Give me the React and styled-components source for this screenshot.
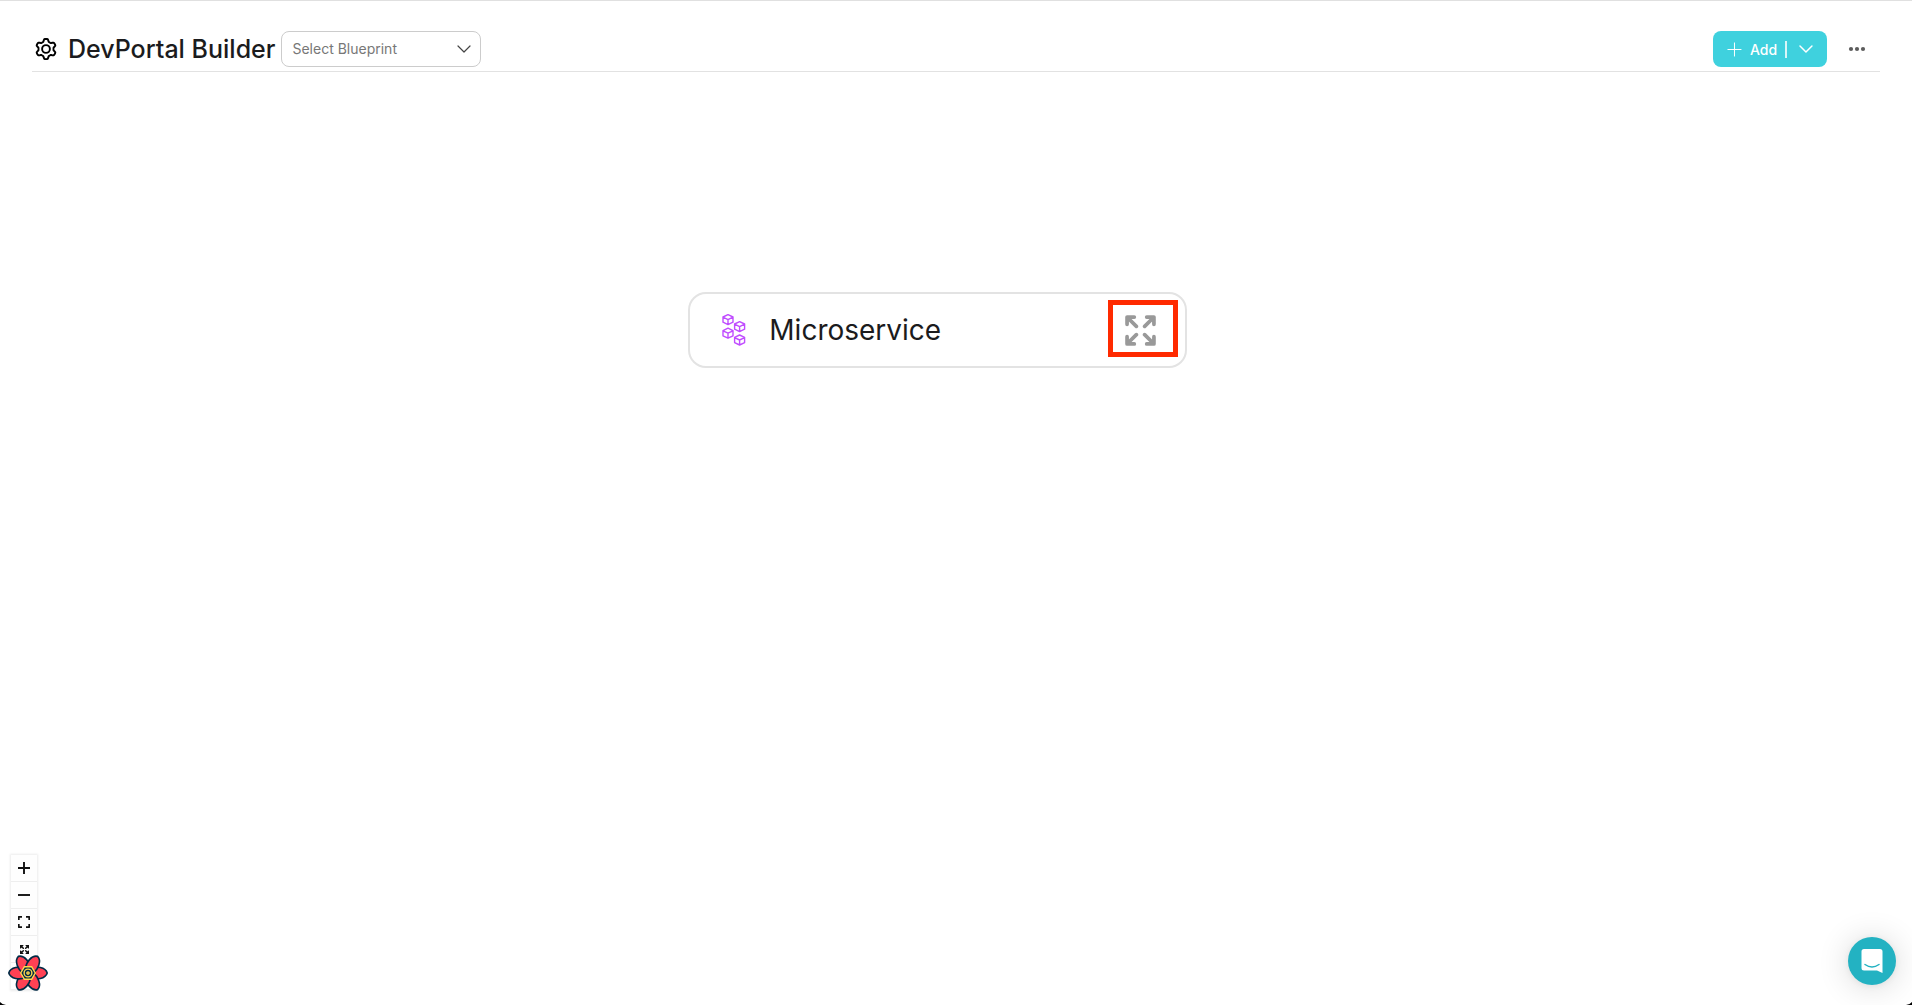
import React from "react";
import styled, { createGlobalStyle } from "styled-components";

const Global = createGlobalStyle`
  *, *::before, *::after { box-sizing: border-box; }
  body { margin: 0; background: #fff; color: #1b1b1d; font-family: Inter, "Liberation Sans", sans-serif; }
  button, select { font: inherit; color: inherit; }
`;

const Page = styled.div`
  position: relative;
  display: flex;
  flex-direction: column;
  min-height: 100vh;
  overflow: hidden;
  border-top: 1px solid #e0e0e0;
`;

const Header = styled.header`
  display: flex;
  align-items: center;
  justify-content: space-between;
  margin: 0 32px;
  padding: 30px 0 4px;
  border-bottom: 1px solid #e2e2e2;
`;

const Group = styled.div`
  display: flex;
  align-items: center;
  gap: ${(p) => p.$gap}px;
  padding: ${(p) => p.$pad || 0};
`;

const Title = styled.h1`
  margin: 0;
  font-size: 25px;
  line-height: 36px;
  font-weight: 500;
`;

const SelectBox = styled.div`
  display: grid;
  align-items: center;
  width: 200px;
  height: 36px;
  & > * { grid-area: 1 / 1; }
  & > svg { justify-self: end; margin-right: 10px; pointer-events: none; }
`;

const Select = styled.select`
  appearance: none;
  width: 100%;
  height: 100%;
  padding: 0 32px 2px 10px;
  border: 1px solid #ccc;
  border-radius: 8px;
  background: #fff;
  color: #777;
  font-size: 14px;
`;

const AddButton = styled.button`
  display: flex;
  align-items: center;
  gap: 8px;
  width: 114px;
  height: 36px;
  padding: 0 14px;
  border: 0;
  border-radius: 8px;
  background: #3fd1de;
  color: #fff;
  font-size: 14px;
  font-weight: 500;
`;

const Divider = styled.span`
  width: 2px;
  height: 17px;
  margin-right: 4px;
  background: #d9f6f8;
`;

const IconButton = styled.button`
  display: grid;
  place-items: center;
  width: ${(p) => p.$size}px;
  height: ${(p) => p.$size}px;
  padding: 0;
  border: 0;
  background: none;
`;

const Canvas = styled.main`
  position: relative;
  flex: 1;
`;

const Node = styled.article`
  position: absolute;
  top: 220px;
  left: 36%;
  display: flex;
  align-items: center;
  width: 499px;
  height: 76px;
  padding: 0 29px 0 32px;
  border: 2px solid #e3e3e3;
  border-radius: 18px;
  background: #fff;
`;

const NodeTitle = styled.h2`
  flex: 1;
  margin: 0 0 0 23px;
  font-size: 28px;
  font-weight: 400;
`;

const Highlight = styled.span`
  position: absolute;
  top: 6px;
  right: 7px;
  width: 70px;
  height: 57px;
  border: 5px solid #ff2a00;
  pointer-events: none;
`;

const Controls = styled.div`
  position: absolute;
  left: 11px;
  bottom: 15px;
  display: flex;
  flex-direction: column;
  box-shadow: 0 0 2px 1px rgba(0, 0, 0, 0.08);
`;

const Control = styled.button`
  display: grid;
  place-items: center;
  width: 26px;
  height: 27px;
  padding: 0;
  border: 0;
  border-bottom: 1px solid #eee;
  background: #fefefe;
`;

const Devtools = styled.button`
  position: absolute;
  left: 8px;
  bottom: 12px;
  width: 40px;
  height: 40px;
  padding: 0;
  border: 0;
  background: none;
`;

const Chat = styled.button`
  position: absolute;
  right: 16px;
  bottom: 20px;
  display: grid;
  place-items: center;
  width: 48px;
  height: 48px;
  padding: 0;
  border: 0;
  border-radius: 50%;
  background: #23b2c2;
  box-shadow: 0 1px 6px rgba(0, 0, 0, 0.06), 0 2px 32px rgba(0, 0, 0, 0.16);
`;

const Corner = styled.svg`
  position: absolute;
  bottom: 0;
  ${(p) => p.$side}: 0;
`;

const gearPath = () => {
  const pts = [];
  for (let i = 0; i < 72; i++) {
    const a = (i / 72) * Math.PI * 2;
    const c = Math.cos(6 * a + Math.PI);
    const r = 8.8 + 1.3 * Math.tanh(2.6 * c);
    pts.push(`${(12 + r * Math.cos(a)).toFixed(2)} ${(12 + r * Math.sin(a)).toFixed(2)}`);
  }
  return `M${pts.join("L")}Z`;
};

const Gear = () => (
  <svg width="24" height="24" viewBox="0 0 24 24" fill="none" stroke="#000" strokeWidth="1.9" strokeLinejoin="round" aria-hidden="true">
    <path d={gearPath()} />
    <circle cx="12" cy="12" r="3.9" />
  </svg>
);

const Chevron = ({ width, stroke, weight }) => (
  <svg width={width} height="10" viewBox="0 0 14 10" fill="none" stroke={stroke} strokeWidth={weight} strokeLinecap="round" strokeLinejoin="round" aria-hidden="true">
    <path d="M1 2l6 6 6-6" />
  </svg>
);

const Cubes = () => (
  <svg width="24" height="32" viewBox="0 0 24 32" fill="none" stroke="#c04dff" strokeWidth="1.4" strokeLinejoin="round" aria-hidden="true">
    {[[6, 5.6], [17.6, 12.6], [6, 19.2], [17.6, 26]].map(([x, y]) => (
      <path key={`${x}-${y}`} transform={`translate(${x} ${y})`} d="M0-5L5-2.6V2.6L0 5-5 2.6V-2.6ZM-5-2.4L0 0 5-2.4M0 0V5" />
    ))}
  </svg>
);

const Expand = ({ size, color, weight = 3.6 }) => (
  <svg width={size} height={size} viewBox="0 0 30 30" fill="none" stroke={color} strokeWidth={weight} strokeLinecap="round" strokeLinejoin="round" aria-hidden="true">
    {[0, 90, 180, 270].map((r) => (
      <path key={r} transform={`rotate(${r} 15 15)`} d="M2 9V2H9M2.4 2.4l8.6 8.6" />
    ))}
  </svg>
);

const Flower = () => (
  <svg width="40" height="40" viewBox="-20 -20 40 40" aria-hidden="true">
    <g fill="#ff4154" stroke="#002b46" strokeWidth="1.6" strokeLinejoin="round">
      {[0, 60, 120, 180, 240, 300].map((r) => (
        <path key={r} transform={`rotate(${r})`} d="M3 4.5C8 7 17.5 6 19.2 0C17.5-6 8-7 3-4.5Z" />
      ))}
    </g>
    <g fill="#002b46" stroke="#ffd94c" strokeWidth="1.4" strokeLinejoin="round">
      <path d="M-3.6-6.3H3.6L7.3 0 3.6 6.3H-3.6L-7.3 0Z" />
      <circle r="3.9" />
      <circle r="1.1" />
    </g>
  </svg>
);

export default function App() {
  return (
    <>
      <Global />
      <Page>
        <Header>
          <Group $gap={6}>
            <Group $gap={10} $pad="0 0 0 2px">
              <Gear />
              <Title>DevPortal Builder</Title>
            </Group>
            <SelectBox>
              <Select aria-label="Select Blueprint" defaultValue="">
                <option value="">Select Blueprint</option>
              </Select>
              <Chevron width={14} stroke="#444" weight="1.2" />
            </SelectBox>
          </Group>
          <Group $gap={18} $pad="0 11px 0 0">
            <AddButton type="button">
              <svg width="15" height="15" viewBox="0 0 15 15" stroke="#fff" aria-hidden="true">
                <path d="M7.5 0.5V14.5M0.5 7.5H14.5" />
              </svg>
              Add
              <Divider />
              <Chevron width={14} stroke="#fff" weight="1.5" />
            </AddButton>
            <IconButton type="button" aria-label="More options" $size={24}>
              <svg width="18" height="6" viewBox="0 0 18 6" fill="#5c5c5c" aria-hidden="true">
                <circle cx="3" cy="3" r="2.1" />
                <circle cx="9" cy="3" r="2.1" />
                <circle cx="15" cy="3" r="2.1" />
              </svg>
            </IconButton>
          </Group>
        </Header>
        <Canvas>
          <Node>
            <Cubes />
            <NodeTitle>Microservice</NodeTitle>
            <IconButton type="button" aria-label="Expand Microservice" $size={32}>
              <Expand size={31} color="#999" />
            </IconButton>
            <Highlight />
          </Node>
          <Controls>
            <Control type="button" aria-label="Zoom in">
              <svg width="12" height="12" viewBox="0 0 12 12" stroke="#111" strokeWidth="1.9"><path d="M6 0V12M0 6H12" /></svg>
            </Control>
            <Control type="button" aria-label="Zoom out">
              <svg width="12" height="12" viewBox="0 0 12 12" stroke="#111" strokeWidth="1.9"><path d="M0 6H12" /></svg>
            </Control>
            <Control type="button" aria-label="Fit view">
              <svg width="12" height="12" viewBox="0 0 12 12" fill="none" stroke="#111" strokeWidth="1.7" strokeLinejoin="round">
                <path d="M0.8 4V0.8H4M8 0.8H11.2V4M11.2 8V11.2H8M4 11.2H0.8V8" />
              </svg>
            </Control>
            <Control type="button" aria-label="Expand all"><Expand size={9} color="#111" weight={5} /></Control>
            <Control type="button" aria-label="Collapse all" />
          </Controls>
          <Devtools type="button" aria-label="Open query devtools"><Flower /></Devtools>
          <Chat type="button" aria-label="Open chat">
            <svg width="22" height="26" viewBox="0 0 22 26" aria-hidden="true">
              <path d="M3 1H19A2.5 2.5 0 0 1 21.5 3.5V25L16 22.5H3A2.5 2.5 0 0 1 0.5 20V3.5A2.5 2.5 0 0 1 3 1Z" fill="#fff" />
              <path d="M4 16.5Q11 21.5 18 16.5" fill="none" stroke="#23b2c2" strokeWidth="1.5" strokeLinecap="round" />
            </svg>
          </Chat>
        </Canvas>
        <Corner $side="left" width="6" height="3" viewBox="0 0 6 3"><path d="M0 0Q2 2.5 6 3H0Z" /></Corner>
        <Corner $side="right" width="6" height="3" viewBox="0 0 6 3"><path d="M6 0Q4 2.5 0 3H6Z" /></Corner>
      </Page>
    </>
  );
}
